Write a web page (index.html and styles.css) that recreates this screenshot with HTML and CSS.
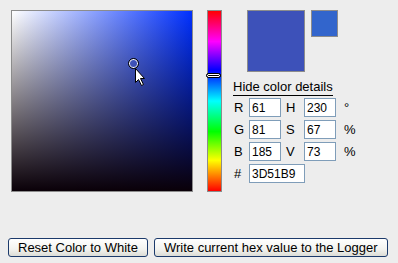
FILE: index.html
```html
<!DOCTYPE html>
<html lang="en">
<head>
    <meta charset="UTF-8">
    <title>Color Picker</title>
    <link rel="stylesheet" href="styles.css">
</head>
<body>
    <div class="picker">
        <div class="field">
            <span class="marker"></span>
            <svg class="pointer" width="13" height="20" viewBox="0 0 13 20">
                <path d="M1.5 1.5 L1.5 15.5 L4.5 12.5 L7.5 18.5 L9.5 17.5 L6.5 11.5 L10.5 11.5 Z" fill="#fff" stroke="#000" stroke-width="1"/>
            </svg>
        </div>
        <div class="hue"><span class="hue-thumb"></span></div>
        <div class="panel">
            <div class="swatches">
                <div class="swatch current"></div>
                <div class="swatch original"></div>
            </div>
            <div class="toggle">Hide color details</div>
            <div class="details">
                <div class="row">
                    <span class="label">R</span><input type="text" value="61">
                    <span class="label second">H</span><input type="text" value="230">
                    <span class="unit">°</span>
                </div>
                <div class="row">
                    <span class="label">G</span><input type="text" value="81">
                    <span class="label second">S</span><input type="text" value="67">
                    <span class="unit">%</span>
                </div>
                <div class="row">
                    <span class="label">B</span><input type="text" value="185">
                    <span class="label second">V</span><input type="text" value="73">
                    <span class="unit">%</span>
                </div>
                <div class="row">
                    <span class="label">#</span><input type="text" class="hex" value="3D51B9">
                </div>
            </div>
        </div>
    </div>

    <div class="actions">
        <button>Reset Color to White</button>
        <button>Write current hex value to the Logger</button>
    </div>
</body>
</html>
```

FILE: styles.css
```css
body {
    background: #ededed;
    color: #000;
    font-family: 'Liberation Sans', Arial, sans-serif;
    font-size: 13px;
    margin: 0;
    padding: 10px 0 0 11px;
}

.picker {
    display: flex;
    align-items: flex-start;
}

.field {
    position: relative;
    width: 180px;
    height: 180px;
    border: 1px solid #8c8c8c;
    background:
        linear-gradient(to top, #0a0008, rgba(0, 0, 0, 0)),
        linear-gradient(to right, #fff, #0030ff);
}

.marker {
    position: absolute;
    left: 116px;
    top: 47px;
    width: 9px;
    height: 9px;
    border: 1px solid #000;
    border-radius: 50%;
    box-shadow: inset 0 0 0 1px #fff;
}

.pointer {
    position: absolute;
    left: 122px;
    top: 56px;
}

.hue {
    position: relative;
    width: 13px;
    height: 180px;
    margin-left: 14px;
    border: 1px solid #8c8c8c;
    background: linear-gradient(to bottom, #f00, #f0f 17%, #00f 33%, #0ff 50%, #0f0 67%, #ff0 83%, #f00);
}

.hue-thumb {
    position: absolute;
    left: -2px;
    top: 62px;
    width: 13px;
    height: 3px;
    border: 1px solid #000;
    border-radius: 4px;
    box-shadow: inset 0 0 0 1px #fff;
    background: #000;
}

.panel {
    margin-left: 11px;
}

.swatches {
    display: flex;
    align-items: flex-start;
    gap: 6px;
    margin-left: 14px;
}

.swatch {
    border: 1px solid #8c8c8c;
}

.current {
    width: 56px;
    height: 60px;
    background: #3d51b9;
}

.original {
    width: 25px;
    height: 25px;
    background: #3265cc;
}

.toggle {
    width: 100px;
    margin-top: 7px;
    padding-bottom: 1px;
    border-bottom: 1px solid #000;
    line-height: 15px;
    white-space: nowrap;
    cursor: pointer;
}

.details {
    display: flex;
    flex-direction: column;
    gap: 3px;
    margin-top: 2px;
}

.row {
    display: flex;
    align-items: center;
}

.label {
    width: 15px;
    padding-left: 1px;
}

.label.second {
    width: 18px;
    padding-left: 5px;
}

.unit {
    margin-left: 8px;
}

input {
    box-sizing: border-box;
    width: 32px;
    height: 19px;
    padding: 0 2px;
    border: 1px solid #7f9db9;
    background: #fff;
    font-family: 'Liberation Sans', Arial, sans-serif;
    font-size: 12px;
    margin: 0;
}

input.hex {
    width: 56px;
}

.actions {
    display: flex;
    gap: 6px;
    margin: 46px 0 0 -3px;
}

button {
    height: 19px;
    padding: 0 9px;
    border: 1px solid #1c3a6b;
    border-radius: 3px;
    background: linear-gradient(to bottom, #fff, #f3f3ef 60%, #dcdcd6);
    font-family: 'Liberation Sans', Arial, sans-serif;
    font-size: 13px;
    color: #000;
    line-height: 17px;
}
```
